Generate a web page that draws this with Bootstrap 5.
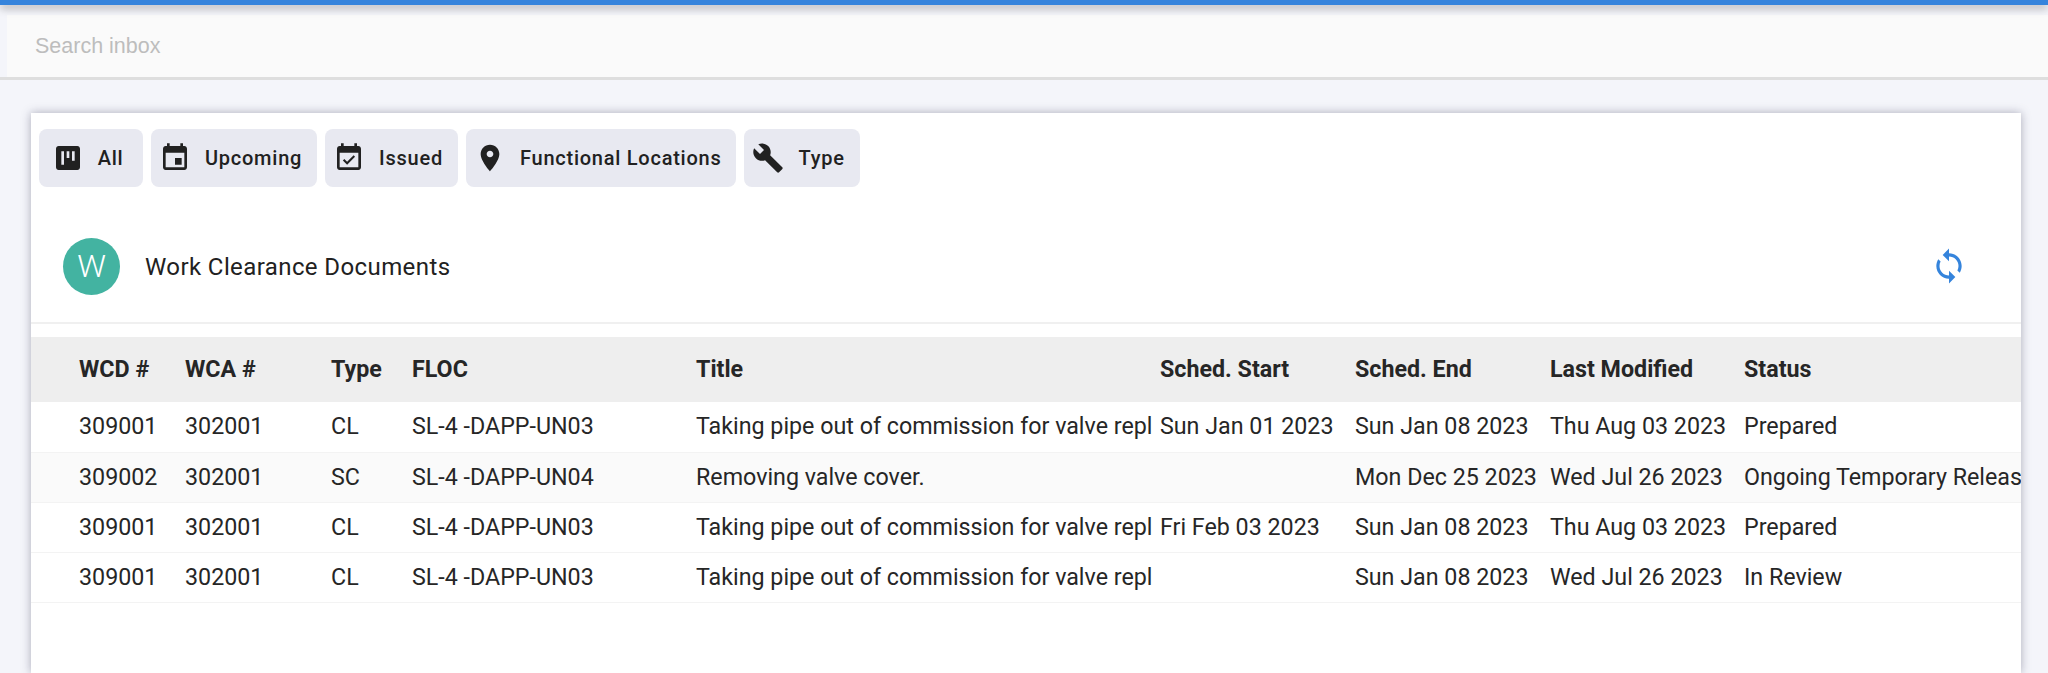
<!DOCTYPE html>
<html lang="en">
<head>
    <meta charset="UTF-8" />
    <title>Work Clearance Documents</title>
    <link href="https://cdn.jsdelivr.net/npm/bootstrap@5.3.0/dist/css/bootstrap.min.css" rel="stylesheet" />
    <style>
      html, body { height: 100%; overflow: hidden; }
      body { background: #f4f5fa; font-family: Roboto, sans-serif; color: #212121; }

      .top-strip { height: 5px; background: #3584dc; box-shadow: 0 3px 9px rgba(0,0,0,.35); position: relative; }

      .search-wrap { height: 75px; padding: 10px 0 0 7px; border-bottom: 3px solid #dedede; }
      .search-input {
          display: block; width: 100%; height: 62px; border: 0; outline: 0;
          background: #fafafa; padding: 0 0 0 28px;
          font-family: "Liberation Sans", Arial, sans-serif; font-size: 21.5px; color: #333;
      }
      .search-input::placeholder { color: #bdbdbd; opacity: 1; }

      .doc-card {
          margin: 33px 27px 0 31px; height: 560px; border: 0; border-radius: 0;
          box-shadow: 0 0 9px rgba(60,60,90,.4); overflow: hidden;
      }

      .filter-bar { padding: 16px 8px 0; gap: 8px; }
      .filter-btn {
          display: flex; align-items: center; justify-content: center; height: 58px; min-width: 104px;
          padding: 0 15px 0 8px; gap: 14px;
          background: #e8e9f1; border: 0; border-radius: 8px; color: #212121;
          font-size: 20px; font-weight: 500; letter-spacing: .75px; --bs-btn-hover-bg: #dfe0ea; --bs-btn-active-bg: #dfe0ea;
      }
      .filter-btn svg { width: 32px; height: 32px; fill: #212121; flex: none; }

      .title-row { height: 137px; padding: 23px 53px 0 32px; border-bottom: 2px solid #f0f0f0; }
      .avatar-dot {
          width: 57px; height: 57px; border-radius: 50%; background: #43b3a1; color: #fff;
          font-size: 32px; font-weight: 300; line-height: 57px; text-align: center;
      }
      .title-text { margin-left: 25px; padding-top: 2px; font-size: 24px; letter-spacing: .4px; color: #212121; }
      .sync-btn svg { width: 38px; height: 38px; fill: #3584dc; display: block; }

      .doc-table { table-layout: fixed; width: 1990px; margin: 13px 0 0; font-size: 23.25px; --bs-table-color: #262626; }
      .doc-table th, .doc-table td {
          white-space: nowrap; padding: 0 8px 0 0; vertical-align: middle;
          border-bottom: 1px solid #f3f3f3;
      }
      .doc-table th { height: 65px; background: #eeeeee; font-weight: 700; border: 0; }
      .doc-table td { height: 50px; }
      .doc-table th:first-child, .doc-table td:first-child { padding-left: 48px; }
      .doc-table th:last-child, .doc-table td:last-child { padding-right: 0; }
      .doc-table tr.alt-row td { background: #fafafa; }
      .cell-clip { overflow: hidden; }

      .c1 { width: 154px; } .c2 { width: 146px; } .c3 { width: 81px; }
      .c4 { width: 284px; } .c5 { width: 464px; } .c6 { width: 195px; }
      .c7 { width: 195px; } .c8 { width: 194px; } .c9 { width: 277px; }
    </style>
</head>
<body>

<div class="top-strip"></div>

<div class="search-wrap">
    <input type="text" class="search-input" placeholder="Search inbox" />
</div>

<div class="card doc-card">
    <div class="d-flex filter-bar">
        <button class="btn filter-btn" type="button">
            <svg viewBox="0 0 24 24"><path d="M19 3H5c-1.1 0-2 .9-2 2v14c0 1.1.9 2 2 2h14c1.1 0 2-.9 2-2V5c0-1.1-.9-2-2-2zM9 17H7V7h2v10zm4-5h-2V7h2v5zm4 2h-2V7h2v7z"/></svg>
            All
        </button>
        <button class="btn filter-btn" type="button">
            <svg viewBox="0 0 24 24"><path d="M17 12h-5v5h5v-5zM16 1v2H8V1H6v2H5c-1.11 0-1.99.9-1.99 2L3 19c0 1.1.89 2 2 2h14c1.1 0 2-.9 2-2V5c0-1.1-.9-2-2-2h-1V1h-2zm3 18H5V8h14v11z"/></svg>
            Upcoming
        </button>
        <button class="btn filter-btn" type="button">
            <svg viewBox="0 0 24 24"><path d="M16.53 11.06L15.47 10l-4.88 4.88-2.12-2.12-1.06 1.06L10.59 17l5.94-5.94zM19 3h-1V1h-2v2H8V1H6v2H5c-1.11 0-1.99.9-1.99 2L3 19c0 1.1.89 2 2 2h14c1.1 0 2-.9 2-2V5c0-1.1-.9-2-2-2zm0 16H5V8h14v11z"/></svg>
            Issued
        </button>
        <button class="btn filter-btn" type="button">
            <svg viewBox="0 0 24 24"><path d="M12 2C8.13 2 5 5.13 5 9c0 5.25 7 13 7 13s7-7.75 7-13c0-3.87-3.13-7-7-7zm0 9.5c-1.38 0-2.5-1.12-2.5-2.5s1.12-2.5 2.5-2.5 2.5 1.12 2.5 2.5-1.12 2.5-2.5 2.5z"/></svg>
            Functional Locations
        </button>
        <button class="btn filter-btn" type="button">
            <svg viewBox="0 0 24 24"><path d="M22.7 19l-9.1-9.1c.9-2.3.4-5-1.5-6.9-2-2-5-2.4-7.4-1.3L9 6 6 9 1.6 4.7C.4 7.1.9 10.1 2.9 12.1c1.9 1.9 4.6 2.4 6.9 1.5l9.1 9.1c.4.4 1 .4 1.4 0l2.3-2.3c.5-.4.5-1.1.1-1.4z"/></svg>
            Type
        </button>
    </div>

    <div class="d-flex align-items-center title-row">
        <div class="avatar-dot">W</div>
        <div class="title-text">Work Clearance Documents</div>
        <div class="ms-auto sync-btn">
            <svg viewBox="0 0 24 24"><path d="M12 4V1L8 5l4 4V6c3.31 0 6 2.69 6 6 0 1.01-.25 1.97-.7 2.8l1.46 1.46C19.54 15.03 20 13.57 20 12c0-4.42-3.58-8-8-8zm0 14c-3.31 0-6-2.69-6-6 0-1.01.25-1.97.7-2.8L5.24 7.74C4.46 8.97 4 10.43 4 12c0 4.42 3.58 8 8 8v3l4-4-4-4v3z"/></svg>
        </div>
    </div>

    <table class="table doc-table">
        <colgroup>
            <col class="c1"><col class="c2"><col class="c3"><col class="c4"><col class="c5"><col class="c6"><col class="c7"><col class="c8"><col class="c9">
        </colgroup>
        <thead>
            <tr><th>WCD #</th><th>WCA #</th><th>Type</th><th>FLOC</th><th>Title</th><th>Sched. Start</th><th>Sched. End</th><th>Last Modified</th><th>Status</th></tr>
        </thead>
        <tbody>
            <tr><td>309001</td><td>302001</td><td>CL</td><td>SL-4 -DAPP-UN03</td><td><div class="cell-clip">Taking pipe out of commission for valve replacement</div></td><td>Sun Jan 01 2023</td><td>Sun Jan 08 2023</td><td>Thu Aug 03 2023</td><td>Prepared</td></tr>
            <tr class="alt-row"><td>309002</td><td>302001</td><td>SC</td><td>SL-4 -DAPP-UN04</td><td><div class="cell-clip">Removing valve cover.</div></td><td></td><td>Mon Dec 25 2023</td><td>Wed Jul 26 2023</td><td><div class="cell-clip">Ongoing Temporary Release</div></td></tr>
            <tr><td>309001</td><td>302001</td><td>CL</td><td>SL-4 -DAPP-UN03</td><td><div class="cell-clip">Taking pipe out of commission for valve replacement</div></td><td>Fri Feb 03 2023</td><td>Sun Jan 08 2023</td><td>Thu Aug 03 2023</td><td>Prepared</td></tr>
            <tr><td>309001</td><td>302001</td><td>CL</td><td>SL-4 -DAPP-UN03</td><td><div class="cell-clip">Taking pipe out of commission for valve replacement</div></td><td></td><td>Sun Jan 08 2023</td><td>Wed Jul 26 2023</td><td>In Review</td></tr>
        </tbody>
    </table>
</div>

<script src="https://cdn.jsdelivr.net/npm/bootstrap@5.3.0/dist/js/bootstrap.bundle.min.js"></script>
</body>
</html>
